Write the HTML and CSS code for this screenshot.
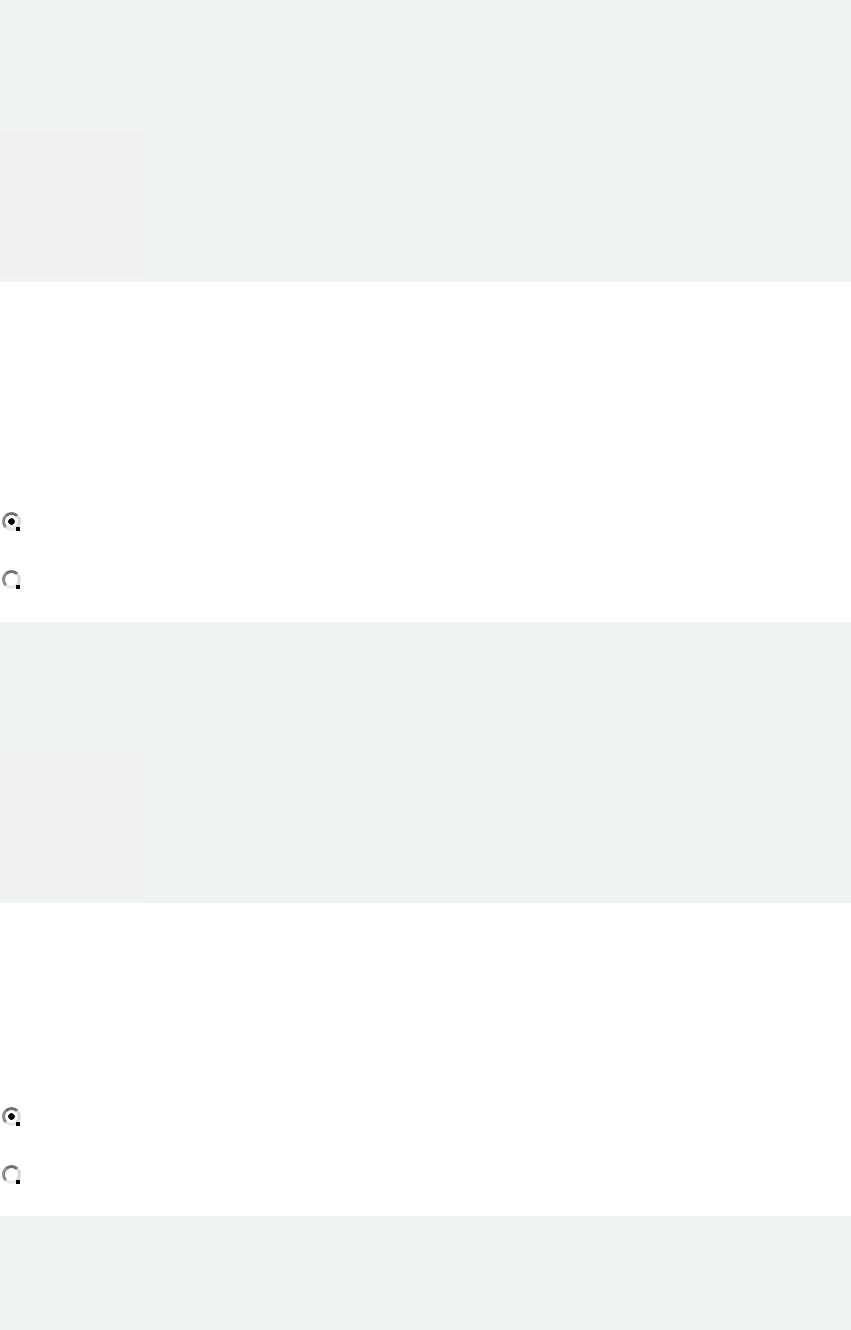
FILE: index.html
```html
<!DOCTYPE html>
<html>
<head>
<meta charset="utf-8">
<link rel="stylesheet" href="styles.css">
</head>
<body>
<div class="band band-first"><div class="thumb"></div></div>
<div class="options options-first">
  <label class="opt"><input type="radio" name="a" checked></label>
  <label class="opt"><input type="radio" name="a"></label>
</div>
<div class="band band-second"><div class="thumb"></div></div>
<div class="options options-second">
  <label class="opt"><input type="radio" name="b" checked></label>
  <label class="opt"><input type="radio" name="b"></label>
</div>
<div class="band band-last"></div>
</body>
</html>
```
FILE: styles.css
```css
html, body {
  margin: 0;
  padding: 0;
  background: #ffffff;
  font-family: "Liberation Sans", Arial, sans-serif;
}
.band {
  background: #eff3f4;
  box-sizing: border-box;
  padding-top: 132px;
}
.band-first { height: 282px; }
.band-second { height: 281px; }
.band-last { height: 114px; padding-top: 0; }
.thumb {
  width: 144px;
  height: 144px;
  background: #f0f0f0;
}
.options {
  display: flex;
  flex-direction: column;
  gap: 39px;
  box-sizing: border-box;
  padding-left: 2px;
}
.options-first { height: 340px; padding-top: 230px; }
.options-second { height: 313px; padding-top: 204px; }
.opt {
  display: flex;
  height: 19px;
}
.opt input {
  -webkit-appearance: none;
  appearance: none;
  margin: 0;
  width: 19px;
  height: 19px;
  box-sizing: border-box;
  border-radius: 50%;
  border: 3px solid #d8d8d8;
  border-top-color: #707070;
  border-left-color: #8a8a8a;
  border-bottom-color: #e6e6e6;
  background: #ffffff;
  position: relative;
}
.opt input::after {
  content: "";
  position: absolute;
  right: -2px;
  bottom: -3px;
  width: 4px;
  height: 4px;
  background: #000;
}
.opt input:checked {
  background: radial-gradient(circle, #000 0 3px, #fff 3.5px);
}
```
